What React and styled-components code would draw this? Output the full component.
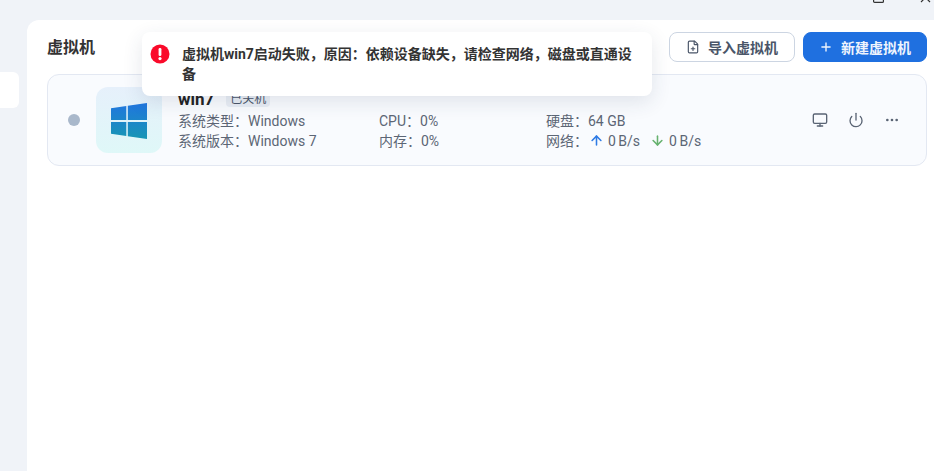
import React from 'react';
import styled, { createGlobalStyle } from 'styled-components';
import { Monitor, Power, Ellipsis, Plus, FilePlus, ArrowUp, ArrowDown } from 'lucide-react';

const fontStack = 'Roboto, "Noto Sans CJK SC", sans-serif';

const GlobalStyle = createGlobalStyle`
	html, body {
		margin: 0;
		height: 100%;
		overflow: hidden;
		background-color: #f0f3f8;
		font-family: ${fontStack};
	}
	* { box-sizing: border-box; }
`;

const Page = styled.div`
	width: 934px;
	height: 471px;
	display: flex;
	position: relative;
	overflow: hidden;
`;

const Sidebar = styled.aside`
	width: 27px;
	flex: none;
	padding-top: 72px;
`;

const SideItem = styled.div`
	width: 19px;
	height: 36px;
	background-color: #fff;
	border-radius: 0 6px 6px 0;
`;

const Column = styled.div`
	flex: 1;
	display: flex;
	flex-direction: column;
	min-width: 0;
`;

const TitleBar = styled.div`
	height: 20px;
	flex: none;
	display: flex;
	justify-content: flex-end;
	gap: 36px;
	padding-right: 3px;
	overflow: hidden;
	color: #333;
`;

const WindowIcon = styled.svg`
	width: 11px;
	height: 11px;
	margin-top: -8px;
`;

const Panel = styled.main`
	flex: 1;
	background-color: #fff;
	border-top-left-radius: 12px;
	padding: 12px 7px 0 20px;
`;

const Header = styled.header`
	display: flex;
	align-items: center;
	justify-content: space-between;
	height: 30px;
	margin-bottom: 12px;
`;

const Title = styled.h1`
	margin: 0 0 2px;
	font-size: 16px;
	font-weight: 700;
	color: #333;
`;

const Actions = styled.div`
	display: flex;
	gap: 8px;
`;

const Button = styled.button`
	height: 30px;
	width: ${({ $primary }) => ($primary ? '124px' : '126px')};
	display: flex;
	align-items: center;
	justify-content: center;
	gap: 8px;
	padding: 0;
	border-radius: 8px;
	border: 1px solid ${({ $primary }) => ($primary ? '#1f70e0' : '#ccd5e2')};
	background-color: ${({ $primary }) => ($primary ? '#1f70e0' : '#fff')};
	color: ${({ $primary }) => ($primary ? '#eef4fd' : '#4a5568')};
	font-family: ${fontStack};
	font-size: 14px;
	font-weight: 700;
`;

const Card = styled.section`
	height: 92px;
	display: flex;
	align-items: center;
	padding: 0 26px 0 20px;
	background-color: #f9fbfe;
	border: 1px solid #e3e8f2;
	border-radius: 12px;
`;

const StatusDot = styled.span`
	width: 12px;
	height: 12px;
	flex: none;
	border-radius: 50%;
	background-color: #a9b8cb;
`;

const IconTile = styled.div`
	width: 66px;
	height: 66px;
	flex: none;
	margin-left: 16px;
	display: flex;
	align-items: center;
	justify-content: center;
	padding-top: 2px;
	border-radius: 12px;
	background: linear-gradient(180deg, #e6f0fb 0%, #dff8f8 100%);
`;

const Info = styled.div`
	flex: 1;
	margin-left: 16px;
	display: flex;
	flex-direction: column;
	font-size: 14px;
	color: #5c6675;
`;

const NameRow = styled.div`
	display: flex;
	align-items: center;
	gap: 12px;
	height: 18px;
	margin-bottom: 3px;
`;

const Name = styled.span`
	font-size: 17px;
	font-weight: 700;
	color: #222;
	line-height: 18px;
`;

const Badge = styled.span`
	height: 16px;
	padding: 0 4px;
	font-size: 12px;
	line-height: 16px;
	border-radius: 4px;
	background-color: #e9eef5;
	color: #4a5568;
`;

const Specs = styled.div`
	display: grid;
	grid-template-columns: 201px 167px 1fr;
	grid-auto-rows: 20px;
	line-height: 20px;
	white-space: nowrap;
`;

const Spec = styled.span`
	display: flex;
	align-items: center;
`;

const Rate = styled.span`
	display: inline-flex;
	align-items: center;
	gap: 4px;
	margin-left: ${({ $first }) => ($first ? '1px' : '10px')};
	word-spacing: -1px;
	color: #5c6675;
	svg { color: ${({ $tone }) => $tone}; }
`;

const CardActions = styled.div`
	display: flex;
	align-items: center;
	gap: 20px;
	color: #5a6474;
`;

const Toast = styled.div`
	position: absolute;
	left: 142px;
	top: 32px;
	width: 510px;
	height: 64px;
	display: flex;
	padding: 12px 16px 0 8px;
	background-color: #fff;
	border-radius: 8px;
	box-shadow: 0 6px 20px rgba(40, 60, 90, 0.12);
`;

const ToastIcon = styled.svg`
	width: 20px;
	height: 20px;
	flex: none;
`;

const ToastText = styled.p`
	margin: 0 0 0 12px;
	font-size: 14px;
	font-weight: 700;
	line-height: 20px;
	color: #333;
`;

const specs = [
	['系统类型：Windows', 'CPU：0%', '硬盘：64 GB'],
	['系统版本：Windows 7', '内存：0%']
];

const WindowsLogo = () => (
	<svg width="36" height="36" viewBox="0 0 36 36">
		<defs>
			<linearGradient id="winLogo" x1="0" y1="0" x2="0" y2="1">
				<stop offset="0" stopColor="#2076df" />
				<stop offset="1" stopColor="#1896b4" />
			</linearGradient>
		</defs>
		<path fill="url(#winLogo)" d="M0 5.2 15.3 3v14.1H0zM16.8 2.8 36 0v17.1H16.8zM0 18.9h15.3V33L0 30.8zM16.8 18.9H36V36l-19.2-2.8z" />
	</svg>
);

const App = () => (
	<Page>
		<GlobalStyle />
		<Sidebar><SideItem /></Sidebar>
		<Column>
			<TitleBar>
				<WindowIcon viewBox="0 0 11 11" fill="none" stroke="currentColor" strokeWidth="1.2">
					<rect x="0.6" y="0.6" width="9.8" height="9.8" rx="1" />
				</WindowIcon>
				<WindowIcon viewBox="0 0 11 11" fill="none" stroke="currentColor" strokeWidth="1.2">
					<path d="M1 1 10 10M10 1 1 10" />
				</WindowIcon>
			</TitleBar>
			<Panel>
				<Header>
					<Title>虚拟机</Title>
					<Actions>
						<Button><FilePlus size={14} />导入虚拟机</Button>
						<Button $primary><Plus size={14} strokeWidth={2.4} />新建虚拟机</Button>
					</Actions>
				</Header>
				<Card>
					<StatusDot />
					<IconTile><WindowsLogo /></IconTile>
					<Info>
						<NameRow>
							<Name>win7</Name>
							<Badge>已关机</Badge>
						</NameRow>
						<Specs>
							{specs[0].map((text) => <Spec key={text}>{text}</Spec>)}
							{specs[1].map((text) => <Spec key={text}>{text}</Spec>)}
							<Spec>
								网络：
								<Rate $first $tone="#2f7be5"><ArrowUp size={15} strokeWidth={2.5} />0 B/s</Rate>
								<Rate $tone="#67b26f"><ArrowDown size={15} strokeWidth={2.5} />0 B/s</Rate>
							</Spec>
						</Specs>
					</Info>
					<CardActions>
						<Monitor size={16} />
						<Power size={16} />
						<Ellipsis size={16} />
					</CardActions>
				</Card>
			</Panel>
		</Column>
		<Toast>
			<ToastIcon viewBox="0 0 20 20">
				<circle cx="10" cy="10" r="9.5" fill="#fa0a2a" />
				<rect x="8.6" y="4" width="2.8" height="8" rx="1.2" fill="#fff" />
				<circle cx="10" cy="14.6" r="1.6" fill="#fff" />
			</ToastIcon>
			<ToastText>虚拟机win7启动失败，原因：依赖设备缺失，请检查网络，磁盘或直通设备</ToastText>
		</Toast>
	</Page>
);

export default App;
